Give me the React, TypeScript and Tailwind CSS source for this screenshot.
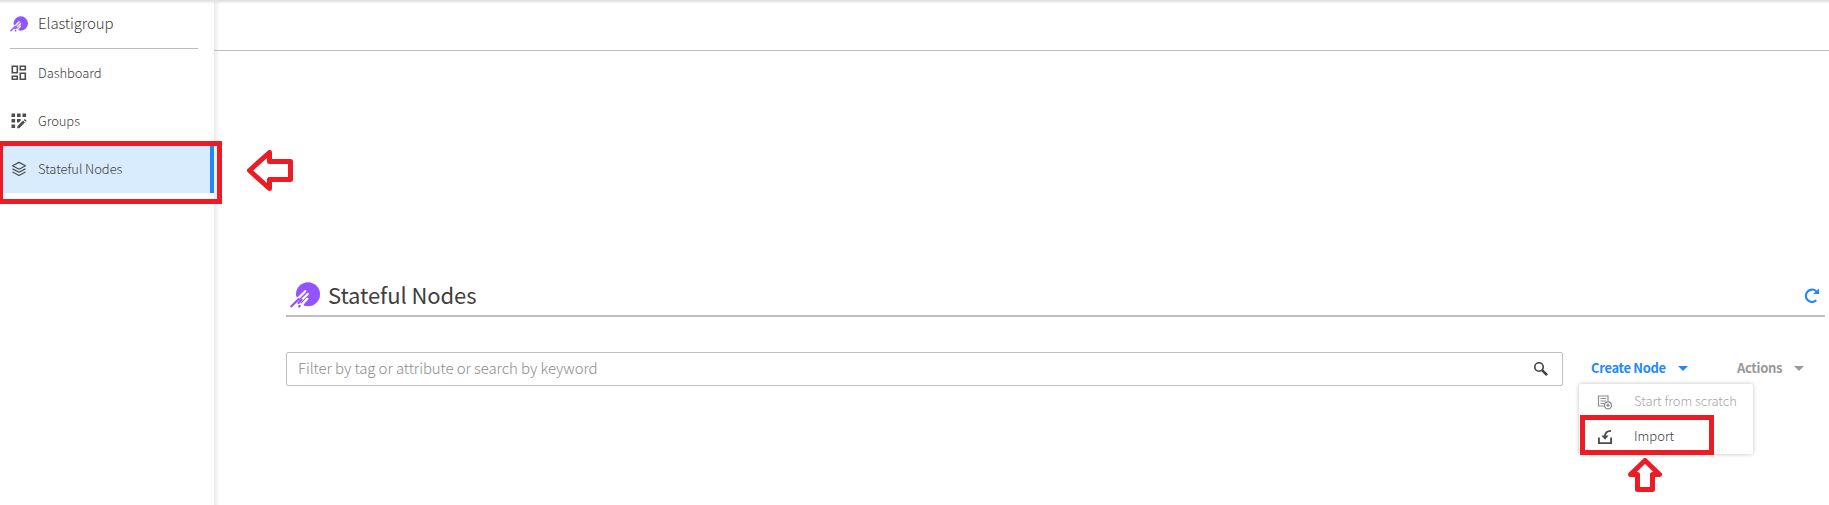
import React from "react";

function CometIcon({ className }: { className: string }) {
  return (
    <svg viewBox="0 0 30 26" className={className} fill="none" strokeLinecap="round">
      <circle cx="18" cy="12.2" r="12" fill="#9154ff" />
      <path d="M4 13 8 15.500 9.500 20 14 22.500 13 26H4z" fill="#fff" />
      <path d="M7.500 17 15.200 9.300M9 20.500 17.800 12M13 21.500 17.300 16.800" stroke="#fff" strokeWidth="2.300" />
      <path d="M1.4 24.300 8.500 17.300M9.200 24.400l.4-.4M8.500 21 11.500 17.800" stroke="#9154ff" strokeWidth="2.300" />
    </svg>
  );
}

function DashboardIcon() {
  return (
    <svg viewBox="0 0 16 16" className="h-4 w-4" fill="none" stroke="#4d4d4d" strokeWidth="1.6">
      <path d="M1.3 1.3h5v6.4h-5zM9.3 1.3h5v3.4h-5zM1.3 11.3h5v3h-5zM9.3 8.3h5v6h-5z" />
    </svg>
  );
}

function GroupsIcon() {
  return (
    <svg viewBox="0 0 16 16" className="h-4 w-4" fill="#4d4d4d">
      <path d="M.5.5h3.6v3.6H.5zM6 .5h3.600v3.600H6zM11.500.5h3.600v3.600h-3.600zM.5 6h3.600v3.600H.5zM6 6h3.600v1.800L7.800 9.600H6zM.5 11.500h3.600v3.600H.5z" />
      <path d="M6.300 13.200 12 7.600l1.900 1.900-5.600 5.700H6.300zM12.700 6.900l1-1 1.900 1.900-1 1z" />
    </svg>
  );
}

function LayersIcon() {
  return (
    <svg viewBox="0 0 16 16" className="h-4 w-4" fill="none" stroke="#4d4d4d" strokeWidth="1.2" strokeLinejoin="round">
      <path d="M8 1.400 14.500 4.800 8 8.200 1.500 4.800zM1.500 7.900 8 11.300l6.500-3.400M1.500 11 8 14.500 14.500 11" />
    </svg>
  );
}

function Caret() {
  return (
    <svg viewBox="0 0 10 5" className="mb-[2px] h-[5px] w-[10px]" fill="currentColor">
      <path d="M0 0h10L5 5z" />
    </svg>
  );
}

function NavItem({ icon, label, active }: { icon: React.ReactNode; label: string; active?: boolean }) {
  return (
    <a className={active ? "flex h-12 items-center border-r-4 border-[#1e88ff] bg-[#d9ecfe] pl-[11px]" : "flex h-12 items-center pl-[11px]"}>
      {icon}
      <span className="ml-[11px] text-[13px] leading-5 tracking-[-0.07px]">{label}</span>
    </a>
  );
}

export default function App() {
  return (
    <div className="relative flex h-[505px] w-full overflow-hidden bg-white font-['Noto_Sans_CJK_SC','Noto_Sans',sans-serif] font-light text-[#404040]">
      <aside className="h-full w-[214px] shrink-0">
        <div className="mr-4 ml-[10px] flex h-[49px] items-center border-b border-[#bcbcbc]">
          <CometIcon className="h-4 w-[18px]" />
          <span className="ml-[10px] pb-[2px] text-[15px] leading-5 tracking-[-0.1px]">Elastigroup</span>
        </div>
        <nav>
          <NavItem icon={<DashboardIcon />} label="Dashboard" />
          <NavItem icon={<GroupsIcon />} label="Groups" />
          <NavItem icon={<LayersIcon />} label="Stateful Nodes" active />
        </nav>
      </aside>
      <div className="mt-[2px] w-[6px] shrink-0 bg-linear-to-r from-black/8 to-transparent" />

      <main className="-ml-[6px] min-w-0 flex-1">
        <div className="h-[51px] border-b border-[#bfbfbf]" />
        <section className="mt-[224px] mr-1 ml-[72px]">
          <header className="flex h-[42px] items-center border-b-2 border-[#bfbfbf] pr-[6px] pl-1">
            <CometIcon className="h-[26px] w-[30px]" />
            <h1 className="ml-2 pb-[2px] text-[22px] leading-7 font-normal tracking-[-0.08px]">Stateful Nodes</h1>
            <svg viewBox="0 0 14 14" className="ml-auto h-[15px] w-[15px]" fill="none">
              <path d="M11.500 11.500A5.800 5.800 0 1 1 11.500 3" stroke="#1e88ff" strokeWidth="2" />
              <path d="M14 .5V5.500H8.500z" fill="#1e88ff" />
            </svg>
          </header>
          <div className="mt-[35px] flex items-center">
            <div className="flex h-[34px] w-[1277px] shrink-0 items-center justify-between rounded-[2px] border border-[#bfbfbf] pr-[14px] pl-[11px]">
              <span className="pb-[2px] text-[15px] leading-5 tracking-[-0.1px] text-[#8c8c8c]">Filter by tag or attribute or search by keyword</span>
              <svg viewBox="0 0 14 14" className="h-[14px] w-[14px]" fill="none" stroke="#404040">
                <circle cx="5" cy="5" r="4.200" strokeWidth="1.600" />
                <path d="m8.300 8.300 4.800 4.800" strokeWidth="2.600" />
              </svg>
            </div>
            <button className="ml-7 flex items-center text-[13px] leading-5 font-bold tracking-[-0.33px] text-[#1e88ff]">
              <span className="w-[87px] pb-[2px] text-left">Create Node</span>
              <Caret />
            </button>
            <button className="ml-[49px] flex items-center text-[13px] leading-5 font-bold tracking-[-0.33px] text-[#999]">
              <span className="w-[57px] pb-[2px] text-left">Actions</span>
              <Caret />
            </button>
          </div>
        </section>
      </main>

      <div className="absolute top-[384px] left-[1579px] h-[70px] w-[174px] rounded-[2px] bg-white shadow-[0_0_4px_rgba(0,0,0,0.25)]">
        <div className="flex h-[35px] items-center pl-[18px] text-[#a6a6a6]">
          <svg viewBox="0 0 16 16" className="h-4 w-4" fill="none" stroke="#8c8c8c" strokeWidth="1.200">
            <path d="M7.500 12H1.500V2h9.500v5M3.500 4.500h5.500M3.500 7h5.500M3.500 9.500h3.500" />
            <circle cx="11" cy="11.300" r="3.500" />
            <path d="M11 9.500v3.600M9.200 11.300h3.600" />
          </svg>
          <span className="ml-[21px] pb-[2px] text-[13px] leading-5 tracking-[-0.05px]">Start from scratch</span>
        </div>
        <div className="flex h-[35px] items-center pl-[18px]">
          <svg viewBox="0 0 16 16" className="h-4 w-4" fill="none" stroke="#4d4d4d">
            <path d="M1.900 8.500v5.600h12.200V8.500" strokeWidth="1.900" />
            <path d="M14 1.800C10 1.800 8 3.500 8 7.500" strokeWidth="1.700" />
            <path d="M4.300 6.500h7.400L8 10.800z" fill="#4d4d4d" stroke="none" />
          </svg>
          <span className="ml-[21px] pb-[2px] text-[13px] leading-5">Import</span>
        </div>
      </div>

      <div className="absolute inset-x-0 top-0 h-1 bg-linear-to-b from-black/14 to-transparent" />
      <div className="absolute top-[141px] -left-[2px] h-[63px] w-[224px] border-5 border-[#ed1c24]" />
      <svg viewBox="0 0 46 41" className="absolute top-[150px] left-[247px] h-[41px] w-[46px]" fill="#fff" stroke="#ed1c24" strokeWidth="5">
        <path d="M2.500 20.500 22.500 2.500V11.500H43.500V29.500H22.500V38.500Z" strokeLinejoin="round" />
      </svg>
      <div className="absolute top-[415px] left-[1580px] h-10 w-[134px] border-5 border-[#ed1c24]" />
      <svg viewBox="0 0 34 34" className="absolute top-[458px] left-[1628px] h-[34px] w-[34px]" fill="#fff" stroke="#ed1c24" strokeWidth="5">
        <path d="M17 2.500 31.500 16.500H24.500V31.500H9.500V16.500H2.500Z" strokeLinejoin="round" />
      </svg>
    </div>
  );
}
